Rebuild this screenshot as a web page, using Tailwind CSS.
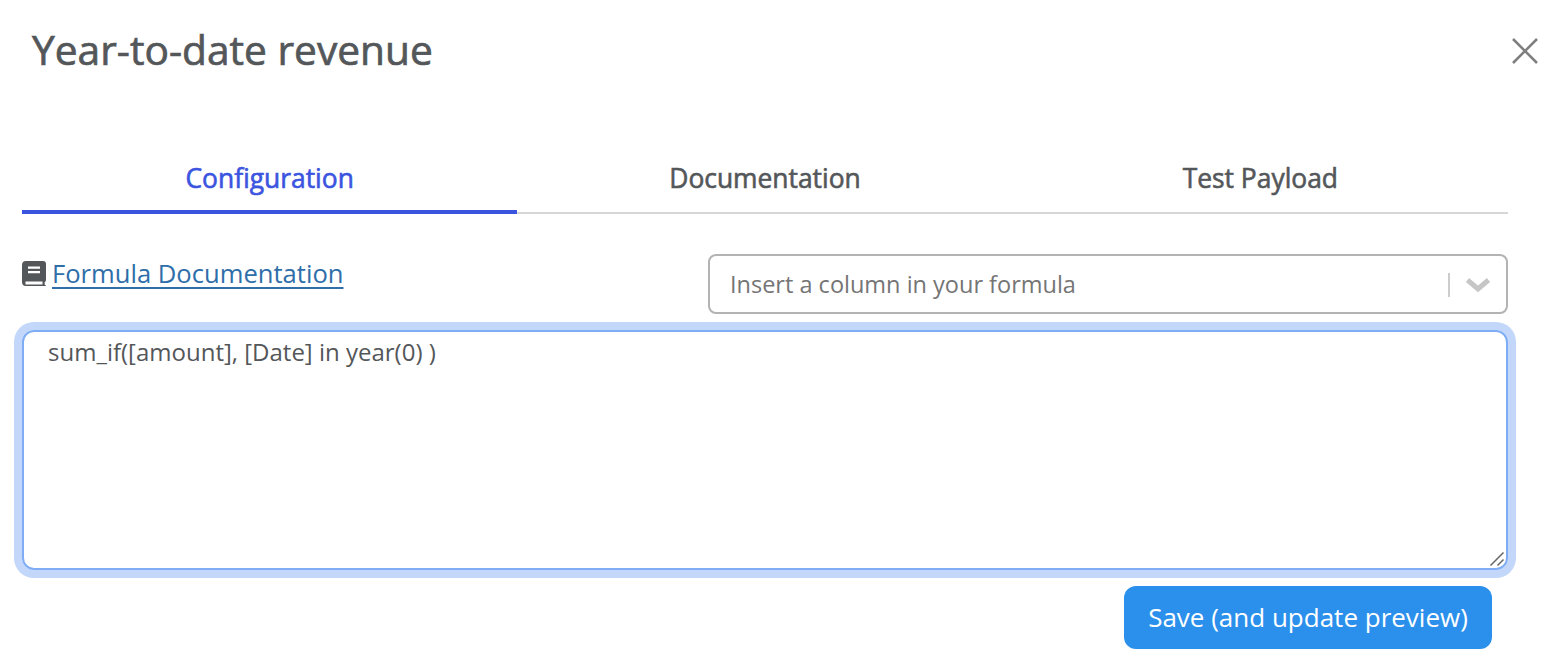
<!DOCTYPE html>
<html lang="en">
<head>
  <meta charset="UTF-8" />
  <title>Year-to-date revenue</title>
  <script src="https://cdn.jsdelivr.net/npm/@tailwindcss/browser@4"></script>
</head>
<body class="bg-white text-[#54575a] font-['Open_Sans',sans-serif] overflow-hidden">
  <div class="w-[1554px] h-[668px] pl-[22px] pr-[46px]">

    <!-- Header -->
    <header class="h-[100px] flex justify-between items-start pl-[10px]">
      <h1 class="text-[40.7px] leading-[54px] mt-[22px] font-normal text-[#54575a] [-webkit-text-stroke:0.7px_#54575a]">Year-to-date revenue</h1>
      <button class="mt-[36px] -mr-[32px]">
        <svg class="w-[30px] h-[30px]" viewBox="0 0 30 30" fill="none" stroke="#7f7f7f" stroke-width="2.6">
          <path d="M3 3 27 27M27 3 3 27" />
        </svg>
      </button>
    </header>

    <!-- Tabs -->
    <nav class="mt-[57px] grid grid-cols-3 border-b-2 border-[#d6d6d6] text-[26.4px] h-[57px]">
      <div class="text-center text-[#3b54e0] border-b-4 border-[#3b54e0] -mb-[2px] leading-[43px] [-webkit-text-stroke:0.6px_#3b54e0]">Configuration</div>
      <div class="text-center leading-[43px] [-webkit-text-stroke:0.6px_#54575a]">Documentation</div>
      <div class="text-center leading-[43px] [-webkit-text-stroke:0.6px_#54575a]">Test Payload</div>
    </nav>

    <!-- Formula toolbar -->
    <div class="mt-[40px] flex justify-between items-start h-[60px]">
      <div class="flex items-start gap-[7px] h-[40px]">
        <svg class="w-[24px] h-[27px] mt-[6px]" viewBox="0 0 24 27">
          <path fill="#54575a" d="M4 1h17a3 3 0 0 1 3 3v16c0 1-.6 1.700-1.300 2v2.800c.8.300 1.300.9 1.300 1.200h-20a4 4 0 0 1-4-4V5a4 4 0 0 1 4-4z" />
          <path fill="#fff" d="M6 6.500h12v2.300H6zM6 11h12v2.300H6zM3.500 21.500h17v3h-17z" />
        </svg>
        <a href="#" class="text-[25.6px] leading-[40px] -ml-[1px] text-[#2f6ea9] underline underline-offset-[4px] decoration-2">Formula Documentation</a>
      </div>
      <div class="w-[800px] h-[60px] border-2 border-[#b3b3b3] rounded-[8px] flex items-center pl-[20px] pt-[1px] text-[23.5px] text-[#757575]">
        <span class="flex-1">Insert a column in your formula</span>
        <span class="w-[2px] h-[24px] bg-[#cccccc]"></span>
        <svg class="w-[26px] h-[16px] mx-[15px]" viewBox="0 0 26 16" fill="none" stroke="#c6c6c6" stroke-width="5">
          <path d="M2.500 3 13 12 23.500 3" />
        </svg>
      </div>
    </div>

    <!-- Formula editor -->
    <div class="relative mt-[16px] h-[240px] border-2 border-[#7fadf5] rounded-[12px] ring-[8px] ring-[#c3d7fb] pl-[24px] pt-[4px] text-[24px] leading-[32px] text-[#54575a]">
      sum_if([amount], [Date] in year(0) )
      <svg class="absolute right-[1px] bottom-[1px] w-[16px] h-[16px]" viewBox="0 0 16 16" fill="none" stroke="#666666" stroke-width="1.500">
        <path d="M1.500 14.500 14.500 1.500M8.500 14.500 14.500 8.500" />
      </svg>
    </div>

    <!-- Footer -->
    <div class="mt-[16px] flex justify-end pr-[16px]">
      <button class="w-[368px] h-[63px] bg-[#2b8fec] rounded-[12px] text-white text-[26px]">Save (and update preview)</button>
    </div>
  </div>
</body>
</html>
